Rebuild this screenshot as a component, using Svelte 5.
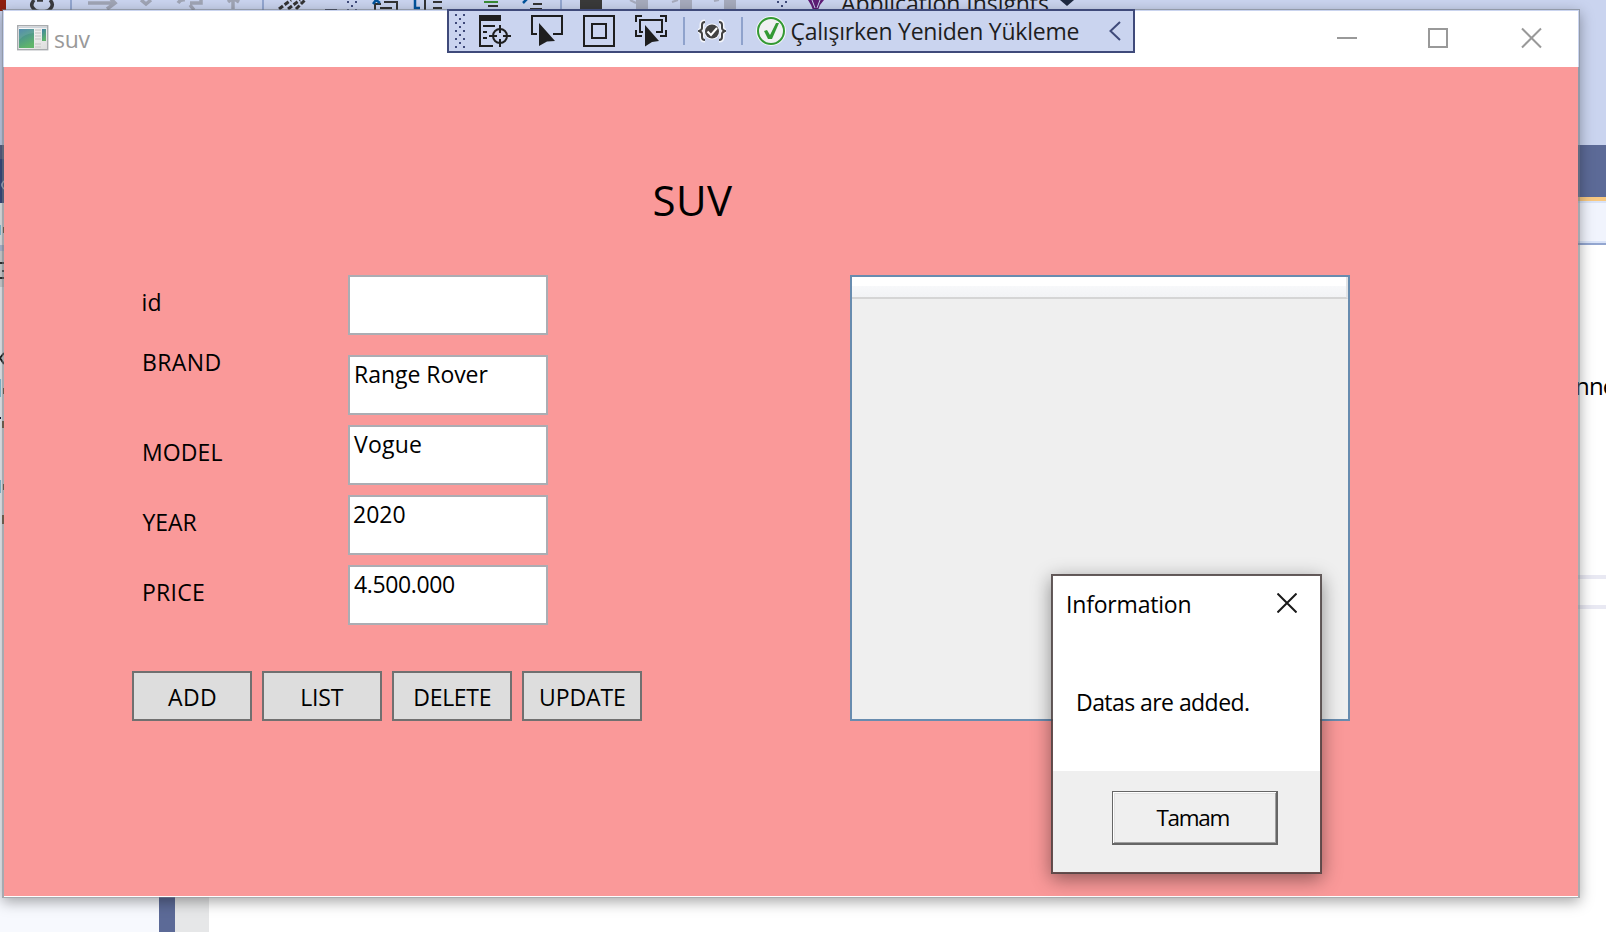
<script>
  const fields = [
    { label: 'id', ink: 18, value: '', valueInk: 0, gap: 20 },
    { label: 'BRAND', ink: 76.5, value: 'Range Rover', valueInk: 132.5, gap: 10 },
    { label: 'MODEL', ink: 78.5, value: 'Vogue', valueInk: 67, gap: 10 },
    { label: 'YEAR', ink: 54, value: '2020', valueInk: 50.5, gap: 10 },
    { label: 'PRICE', ink: 60, value: '4.500.000', valueInk: 100, gap: 10 }
  ];
  const buttons = [
    { label: 'ADD', ink: 48 },
    { label: 'LIST', ink: 41.5 },
    { label: 'DELETE', ink: 75.5 },
    { label: 'UPDATE', ink: 84 }
  ];
  const stem = (text) => /^[BMPRLDU]/.test(text);

  const grip = [];
  for (let r = 0; r < 9; r++) {
    if (r % 2) grip.push([4, r * 4]);
    else grip.push([0, r * 4], [8, r * 4]);
  }

  // Tracks a text so that its glyphs span the given width, starting at the box's left edge.
  function fit(node, width) {
    const text = node.textContent;
    if (!text || !width) return;
    const ctx = document.createElement('canvas').getContext('2d');
    const cs = getComputedStyle(node);
    ctx.font = `${cs.fontWeight} ${cs.fontSize} ${cs.fontFamily}`;
    const m = ctx.measureText(text);
    const ink = m.actualBoundingBoxRight + m.actualBoundingBoxLeft;
    const ls = (width - ink) / Math.max(1, text.length - 1);
    node.style.letterSpacing = `${ls}px`;
    node.style.marginLeft = `${m.actualBoundingBoxLeft}px`;
    node.style.marginRight = `${-(m.width - m.actualBoundingBoxRight) - ls}px`;
  }
</script>

<div class="desktop">
  <div class="ide">
    <div class="band tools">
      <svg class="strip" width="1100" height="12" viewBox="0 0 1100 12">
        <path d="M0 0h6v12H0z" fill="#8f1f10" />
        <path d="M34 0q-4 5-1 8 3 4 9 4t9-4q3-4-1-8M37 0h6" fill="none" stroke="#3b3b3f" stroke-width="3.5" />
        <path d="M70 0h2v10h-2zM262 0h2v10h-2zM560 0h2v10h-2z" fill="#93a6d0" />
        <path d="M88 3h25M107 9l8-6-4-4M141 0l5 4 5-4M178 3q3-4 7-3M190 3h11V-1M233 0v9M228 2l5-4 6 4M194 10l-4-5" fill="none" stroke="#a0a5b5" stroke-width="3.5" />
        <path d="M279 9l12-9M288 9l12-9M296 9l9-9" stroke="#333" stroke-width="3" stroke-dasharray="5 2" />
        <path d="M325 9h12v2h-12z" fill="#252b4a" />
        <path d="M347 1h2v2h-2zM355 1h2v2h-2zM351 5h2v2h-2zM347 9h2v2h-2zM355 9h2v2h-2zM777 1h2v2h-2zM785 1h2v2h-2zM781 5h2v2h-2z" fill="#3f4a7a" />
        <path d="M375 10V4h6M384 2h13v8M380 8h12M425 0v10M433 2h9M433 8h9M488 6h10M533 4h9M530 9h12" fill="none" stroke="#333" stroke-width="2" />
        <path d="M373 4l3-4 4 3M415 0v8h5M523 3l5-5" fill="none" stroke="#00539c" stroke-width="2.5" />
        <path d="M484 2h14" stroke="#388a34" stroke-width="2" />
        <path d="M580 0h22v10h-22z" fill="#3a3a3a" />
        <path d="M636 0h12v10h-12zM680 0h12v10h-12zM724 0h12v10h-12z" fill="#a6abbd" />
        <path d="M630 0l6 3M672 2l6-2M714 1l5-1" stroke="#a6abbd" stroke-width="2" />
        <path d="M808 0h16l-4 5-2 5h-5l-2-5z" fill="#5f1c76" />
        <path d="M812 0l3 8M820 0l-3 8" stroke="#cad4ef" />
        <path d="M1060 0h14l-7 6z" fill="#1e2940" />
      </svg>
      <div class="insights"><span use:fit={207}>Application Insights</span></div>
    </div>
    <div class="band tabs"></div>
    <div class="band nav"></div>
    <div class="editor">
      <div class="codefrag">nne</div>
      <div class="rule first"></div>
      <div class="rule"></div>
    </div>
    <div class="footer">
      <div class="panel"></div>
      <div class="split"></div>
      <div class="margin"></div>
    </div>
  </div>

  <svg class="edge" width="4" height="886" viewBox="0 0 4 886">
    <path d="M0 11h4v134H0z" fill="#cad4ef" />
    <path d="M0 145h4v14H0z" fill="#5c6488" />
    <path d="M0 159h4v44H0z" fill="#3e4f84" />
    <path d="M0 203h4v42H0z" fill="#f0f0f3" />
    <path d="M0 245h4v6H0z" fill="#b9c4e0" />
    <path d="M0 251h4v36H0z" fill="#dcdddf" />
    <path d="M0 287h4v599H0z" fill="#f7f9fe" />
    <path d="M4 181q-4 4 0 8" fill="none" stroke="#bcc5dc" stroke-width="1.5" />
    <path d="M0 225h1v10H0zM0 379h1v18H0zM0 480h1v13H0z" fill="#8cc8e0" />
    <path d="M0 262h4v2H0zM2 270h2v2H2zM0 277h4v2H0z" fill="#333" />
    <path d="M4 353l-4 5 4 6" fill="none" stroke="#222" stroke-width="2" />
    <path d="M0 417h1v2H0z" fill="#113" />
    <path d="M3 227h1v6H3zM3 388h1v6H3zM2 421h2v7H2zM3 484h1v6H3zM2 515h2v9H2z" fill="#6b4a25" />
  </svg>

  <main class="window">
    <header class="titlebar">
      <svg class="appicon" width="32" height="26" viewBox="0 0 32 26">
        <defs>
          <linearGradient id="scr" x1="0" y1="0" x2="0.4" y2="1"><stop offset="0" stop-color="#3f7fa6" /><stop offset="1" stop-color="#5fb56a" /></linearGradient>
          <linearGradient id="frm" x1="0" y1="0" x2="1" y2="1"><stop offset="0" stop-color="#fff" /><stop offset="1" stop-color="#dcdcdc" /></linearGradient>
        </defs>
        <rect x="0.7" y="0.7" width="30" height="24" fill="url(#frm)" stroke="#a8abae" stroke-width="1.4" />
        <path d="M1 2.5h29" stroke="#ccd4dc" />
        <rect x="2" y="4" width="15" height="19" fill="url(#scr)" />
        <path d="M2 15q5-6 15-7V4H2z" fill="#fff" opacity=".1" />
        <path d="M18 5h6M18 8h6M18 11h6M18 14h6M18 19h6M18 22h6" stroke="#cfcfcf" stroke-width="1.5" />
        <rect x="25" y="4" width="4" height="12" fill="url(#scr)" />
      </svg>
      <div class="caption"><span use:fit={35.5}>suv</span></div>
      <svg class="winbtns" width="206" height="22" viewBox="0 0 206 22" fill="none" stroke="#999" stroke-width="2">
        <path d="M0 11h20M92 2h18v18H92z" />
        <path d="M185 1.5l19 19M204 1.5l-19 19" />
      </svg>
    </header>

    <section class="client">
      <h1><span use:fit={78.5}>SUV</span></h1>
      <div class="columns">
        <div class="left">
          {#each fields as f, i}
            <div class="row" class:brand={i === 1} style="margin-bottom:{f.gap}px">
              <label for="f{i}" class:stem={stem(f.label)}><span use:fit={f.ink}>{f.label}</span></label>
              <div class="box" class:stem={stem(f.value)} id="f{i}"><span use:fit={f.valueInk}>{f.value}</span></div>
            </div>
          {/each}
          <div class="actions">
            {#each buttons as b}
              <button class:stem={stem(b.label)}><span use:fit={b.ink}>{b.label}</span></button>
            {/each}
          </div>
        </div>
        <div class="list"><div class="listhead"></div></div>
      </div>
    </section>
  </main>

  <div class="debugbar">
    <svg class="grip" width="10" height="34" viewBox="0 0 10 34" fill="#3f4a7a">
      {#each grip as [x, y]}<rect {x} {y} width="2" height="2" />{/each}
    </svg>
    <svg class="tree" width="32" height="32" viewBox="0 0 32 32" fill="none" stroke="#1e1e1e" stroke-width="2">
      <path d="M0 0h22v6H0z" fill="#1e1e1e" stroke="none" />
      <path d="M1 5v26h13M4 11h12M4 17h4M4 23h4" />
      <circle cx="21" cy="21" r="7" />
      <path d="M21 10v8M21 24v8M10 21h8M24 21h8" />
    </svg>
    <svg class="select" width="32" height="32" viewBox="0 0 32 32" fill="none" stroke="#1e1e1e" stroke-width="2">
      <path d="M6 19H1V1h30v18h-9" />
      <path d="M8 8l16 18-8 .5L8 31z" fill="#1e1e1e" stroke="none" />
    </svg>
    <svg class="layout" width="32" height="32" viewBox="0 0 32 32" fill="none" stroke="#1e1e1e" stroke-width="2">
      <path d="M1 1h30v30H1zM9 9h14v14H9z" />
    </svg>
    <svg class="track" width="32" height="32" viewBox="0 0 32 32" fill="none" stroke="#1e1e1e" stroke-width="2">
      <path d="M1 7V1h6M25 1h6v6M1 15v6h6M31 15v6h-6M8 17H5V5h22v12h-6" />
      <path d="M10 10l14 16-7 1-7 4.500z" fill="#1e1e1e" stroke="none" />
    </svg>
    <i class="sep s1"></i>
    <svg class="braces" width="28" height="28" viewBox="0 0 28 28" fill="none">
      <g stroke="#f4f6fc" stroke-width="5"><path d="M7 5q-3 0-3 3v3q0 2-3 3 3 1 3 3v3q0 3 3 3M21 5q3 0 3 3v3q0 2 3 3-3 1-3 3v3q0 3-3 3" /></g>
      <circle cx="14" cy="14.500" r="8" fill="#f4f6fc" />
      <path d="M7 5q-3 0-3 3v3q0 2-3 3 3 1 3 3v3q0 3 3 3M21 5q3 0 3 3v3q0 2 3 3-3 1-3 3v3q0 3-3 3" stroke="#424242" stroke-width="2" />
      <circle cx="14" cy="14.500" r="7" fill="#424242" />
      <path d="M9.500 14.500l3.500 3.500 6-7" stroke="#fff" stroke-width="2" />
    </svg>
    <i class="sep s2"></i>
    <svg class="ok" width="30" height="30" viewBox="0 0 30 30">
      <circle cx="15" cy="15" r="15" fill="#f6f8fc" />
      <circle cx="15" cy="15" r="13" fill="#f0f0f2" stroke="#339933" stroke-width="2" />
      <path d="M8 15l3-1 3 5 6-12h3l-7 16h-4z" fill="#339933" />
    </svg>
    <div class="reload"><span use:fit={287}>Çalışırken Yeniden Yükleme</span></div>
    <svg class="chev" width="12" height="20" viewBox="0 0 12 20" fill="none" stroke="#3f4a7a" stroke-width="2"><path d="M11 1L1.500 10l9.500 9" /></svg>
  </div>

  <div class="dialog" role="dialog">
    <div class="dhead">
      <span use:fit={122.5}>Information</span>
      <svg width="20" height="20" viewBox="0 0 20 20" stroke="#1a1a1a" stroke-width="2"><path d="M.5.5l19 19M19.500.5l-19 19" /></svg>
    </div>
    <div class="dbody"><span use:fit={171}>Datas are added.</span></div>
    <div class="dfoot"><button class="tamam"><span use:fit={72}>Tamam</span></button></div>
  </div>
</div>

<style>
  :global(body) { margin: 0; overflow: hidden; }
  .desktop, .desktop * { box-sizing: border-box; }
  .desktop {
    position: relative; width: 1606px; height: 932px; overflow: hidden; background: #fff;
    font-family: 'Open Sans', 'Noto Sans', sans-serif; font-size: 23px; line-height: 32px; color: #000;
  }
  svg { display: block; flex: none; }
  span { display: inline-block; white-space: nowrap; }
  .ide { display: flex; flex-direction: column; height: 932px; }
  .band { flex: none; }
  .tools { height: 145px; background: #cad4ef; position: relative; }
  .strip { position: absolute; left: 0; top: 0; }
  .insights { position: absolute; left: 841px; top: -13px; color: #1e1e1e; }
  .tabs { height: 56px; background: #5c6a97; border-bottom: 4px solid #f8c982; }
  .nav { height: 44px; background: #f1f4fd; border-top: 2px solid #d9e3f8; border-bottom: 2px solid #93a6d0; box-shadow: inset 0 -2px #d9e3f8; }
  .editor { flex: 1; }
  .codefrag { margin: 125px 0 0 1575px; font-size: 24px; letter-spacing: -0.8px; height: 32px; overflow: hidden; }
  .rule { height: 4px; margin-top: 26px; background: #e9e9f3; }
  .rule.first { margin-top: 173px; }
  .footer { display: flex; height: 46px; }
  .panel { width: 159px; background: #f7f9fe; }
  .split { width: 16px; background: #5c6a97; }
  .margin { width: 34px; background: #e6e7e8; }
  .edge { position: absolute; left: 0; top: 0; }

  .window {
    position: absolute; left: 2px; top: 9px; width: 1578px; height: 889px;
    border: solid rgba(100, 105, 112, .55); border-width: 1px 2px 1px 2px;
    box-shadow: 0 4px 13px rgba(0, 0, 0, .34);
  }
  .titlebar {
    height: 57px; background: #fff; border-top: 1px solid #cad4ef; box-shadow: 1px 0 #cad4ef, -1px 0 #cad4ef;
    display: flex; align-items: flex-start; padding: 14px 0 0 13px;
  }
  .caption { color: #999; margin: -2px 0 0 6px; height: 32px; flex: 1; }
  .winbtns { margin: 2px 35px 0 0; }
  .client { height: 830px; background: #fa9999; border-bottom: 1px solid #fff; }
  h1 { margin: 0; padding: 99px 0 0 650.5px; height: 208px; font-size: 42px; font-weight: 400; line-height: 68px; }
  .columns { display: flex; }
  .left { width: 846px; padding-left: 128px; }
  .row { display: flex; height: 60px; }
  label { width: 216px; padding: 11px 0 0 10.5px; }
  label.stem { padding-left: 12px; }
  .brand label { padding-top: 0; margin-top: -9px; }
  .box { width: 200px; background: #fff; border: 2px solid #abadb3; padding: 1px 0 0 4px; }
  .box.stem { padding-left: 6px; }
  .actions { display: flex; gap: 10px; margin-top: 46px; }
  button { font: inherit; color: inherit; border-radius: 0; }
  .actions button { width: 120px; height: 50px; padding: 1px 0 0; background: #ddd; border: 2px solid #707070; }
  .actions button.stem { padding-left: 2px; }
  .list { width: 500px; height: 446px; border: 2px solid #688caf; background: #efefef; }
  .listhead { height: 22px; border-bottom: 2px solid #d5d5d5; border-right: 2px solid #e2e4e6; background: linear-gradient(#fff 0 45%, #f7f8fa 46%, #f2f3f5); }

  .debugbar {
    position: absolute; left: 447px; top: 9px; width: 688px; height: 44px;
    border: 2px solid #3f4a7a; background: #cad4ef; display: flex; align-items: flex-start; padding: 4px 0 0 6px;
  }
  .grip { margin-top: -1px; }
  .tree { margin-left: 14px; }
  .select { margin-left: 20px; }
  .layout { margin-left: 20px; }
  .track { margin-left: 20px; }
  .sep { width: 2px; height: 28px; margin-top: 2px; background: #8fa2cc; }
  .s1 { margin-left: 16px; }
  .braces { margin: 2px 0 0 13px; }
  .s2 { margin-left: 15px; }
  .ok { margin: 1px 0 0 13px; }
  .reload { margin: 0 0 0 5.5px; color: #1e1e1e; width: 287px; }
  .chev { margin: 6px 0 0 30px; }

  .dialog {
    position: absolute; left: 1051px; top: 574px; width: 271px; height: 300px; background: #fff;
    border: 2px solid rgba(75, 65, 65, .85); background-clip: padding-box; display: flex; flex-direction: column;
    box-shadow: 0 5px 18px rgba(0, 0, 0, .42);
  }
  .dhead { display: flex; justify-content: space-between; align-items: flex-start; padding: 12px 23px 0 15px; height: 110px; }
  .dhead svg { margin-top: 5px; }
  .dbody { flex: 1; padding-left: 25px; }
  .dfoot { height: 101px; background: #efefef; padding: 20px 0 0 59px; }
  .tamam {
    width: 166px; height: 54px; background: #efefef; padding: 1px 4px 0 0; border: solid #666; border-width: 1px 2px 2px 1px;
    font-size: 22.5px; box-shadow: inset 1px 1px #fff, inset -1px -1px #a0a0a0, inset 2px 2px #e1e1e1;
  }
</style>
